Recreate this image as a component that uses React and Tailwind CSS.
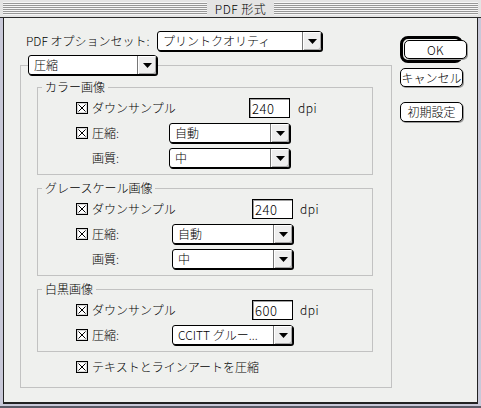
import React from 'react';

const Check = () => (
  <svg width="12" height="12" viewBox="0 0 12 12" className="shrink-0" shapeRendering="crispEdges">
    <rect x="0.5" y="0.5" width="11" height="11" fill="#fff" stroke="#000" />
    <rect x="1.5" y="1.5" width="9" height="9" fill="none" stroke="#d8d8d8" />
    <path d="M2.5 2.5 L9.5 9.5 M9.5 2.5 L2.5 9.5" stroke="#000" strokeWidth="1" shapeRendering="auto" />
  </svg>
);

const Arrow = () => (
  <svg width="9" height="5" viewBox="0 0 9 5">
    <path d="M0 0H9L4.5 5Z" fill="#000" />
  </svg>
);

const Select = ({ text, className = '' }) => (
  <div className={`flex h-[20px] shrink-0 rounded-[3px] border border-black bg-white shadow-[1px_1px_0_#000] ${className}`}>
    <div className="flex flex-1 items-center overflow-hidden whitespace-nowrap pl-[5px] text-[12px] leading-none">{text}</div>
    <div className="flex w-[19px] items-center justify-center rounded-r-[2px] border-l border-[#777] bg-[#eeeeee] shadow-[inset_1px_1px_0_#fff,inset_-1px_-1px_0_#a8a8a8]">
      <Arrow />
    </div>
  </div>
);

const Num = ({ value }) => (
  <div className="ml-auto flex h-[20px] w-[41px] items-center border border-black bg-white pl-[2px] text-[13px] leading-none tracking-[0.5px] shadow-[inset_1px_1px_0_#a0a0a0]">
    {value}
  </div>
);

const Row = ({ check, label, left, children, dpi }) => (
  <div className="flex h-[20px] items-center pl-[38px]">
    <div className={`flex shrink-0 items-center gap-[4px] whitespace-nowrap text-[12px] leading-none ${left}`}>
      {check ? <Check /> : <span className="w-[12px]" />}
      <span>{label}</span>
    </div>
    <div className="flex w-[121px] shrink-0">{children}</div>
    {dpi && <span className={`text-[12px] leading-none tracking-[0.5px] ${dpi}`}>dpi</span>}
  </div>
);

const Group = ({ title, className = '', children }) => (
  <fieldset className={`ml-[16px] w-[336px] border border-[#c2c2c2] pt-[3px] pb-[6px] ${className}`}>
    <legend className="ml-[4px] px-[3px] text-[12px] leading-[16px]">{title}</legend>
    <div className="flex flex-col gap-[5px]">{children}</div>
  </fieldset>
);

const Button = ({ children, className = '' }) => (
  <div className={`flex w-[63px] items-center justify-center rounded-[5px] border border-black bg-white text-[12px] leading-none shadow-[1px_1px_0_#9a9a9a] ${className}`}>
    {children}
  </div>
);

const stripes =
  'h-[13px] flex-1 bg-[repeating-linear-gradient(to_bottom,#f6f6f6_0px,#f6f6f6_1px,#979797_1px,#979797_2px)]';

export default function App() {
  return (
    <div className="flex h-[408px] w-[481px] flex-col overflow-hidden border-b-2 border-[#5a5a66] bg-[#c8c8d8] font-['Noto_Sans_CJK_JP','Noto_Sans',sans-serif] font-light text-black">
      {/* title bar */}
      <div className="flex h-[18px] shrink-0 items-center border-b border-[#2a2a2a] bg-[#e4e4e4] px-[3px]">
        <div className={stripes} />
        <span className="px-[8px] text-[12px] leading-none tracking-[0.5px]">PDF 形式</span>
        <div className={stripes} />
      </div>

      <div className="flex-1 px-[3px] pb-[2px]">
        <div className="flex h-full border-x border-b-2 border-[#222] bg-[#eff0ee]">
          {/* left side */}
          <div className="flex flex-col pt-[13px]">
            <div className="ml-[22px] flex items-center">
              <span className="w-[131px] whitespace-nowrap text-[12px] leading-none">PDF オプションセット:</span>
              <Select text="プリントクオリティ" className="w-[165px]" />
            </div>

            <fieldset className="ml-[16px] mt-[4px] w-[372px] border border-[#c2c2c2] pb-[10px]">
              <legend className="ml-[7px]">
                <Select text="圧縮" className="w-[129px]" />
              </legend>

              <Group title="カラー画像" className="mt-[4px]">
                <Row check label="ダウンサンプル" left="w-[93px]" dpi="ml-[8px]">
                  <Num value="240" />
                </Row>
                <Row check label="圧縮:" left="w-[93px]">
                  <Select text="自動" className="w-[121px]" />
                </Row>
                <Row label="画質:" left="w-[93px]">
                  <Select text="中" className="w-[121px]" />
                </Row>
              </Group>

              <Group title="グレースケール画像" className="mt-[5px]">
                <Row check label="ダウンサンプル" left="w-[96px]" dpi="ml-[7px]">
                  <Num value="240" />
                </Row>
                <Row check label="圧縮:" left="w-[96px]">
                  <Select text="自動" className="w-[121px]" />
                </Row>
                <Row label="画質:" left="w-[96px]">
                  <Select text="中" className="w-[121px]" />
                </Row>
              </Group>

              <Group title="白黒画像" className="mt-[5px]">
                <Row check label="ダウンサンプル" left="w-[96px]" dpi="ml-[7px]">
                  <Num value="600" />
                </Row>
                <Row check label="圧縮:" left="w-[96px]">
                  <Select text="CCITT グルー..." className="w-[121px]" />
                </Row>
              </Group>

              <div className="mt-[5px] flex h-[20px] items-center gap-[4px] pl-[55px] text-[12px] leading-none">
                <Check />
                <span>テキストとラインアートを圧縮</span>
              </div>
            </fieldset>
          </div>

          {/* buttons */}
          <div className="ml-[8px] flex w-[63px] flex-col pt-[18px]">
            <div className="h-[27px] rounded-[8px] border-[3px] border-black p-[1px]">
              <Button className="h-full tracking-[0.5px]">OK</Button>
            </div>
            <Button className="mt-[5px] h-[19px]">キャンセル</Button>
            <Button className="mt-[15px] h-[20px]">初期設定</Button>
          </div>
        </div>
      </div>
    </div>
  );
}
